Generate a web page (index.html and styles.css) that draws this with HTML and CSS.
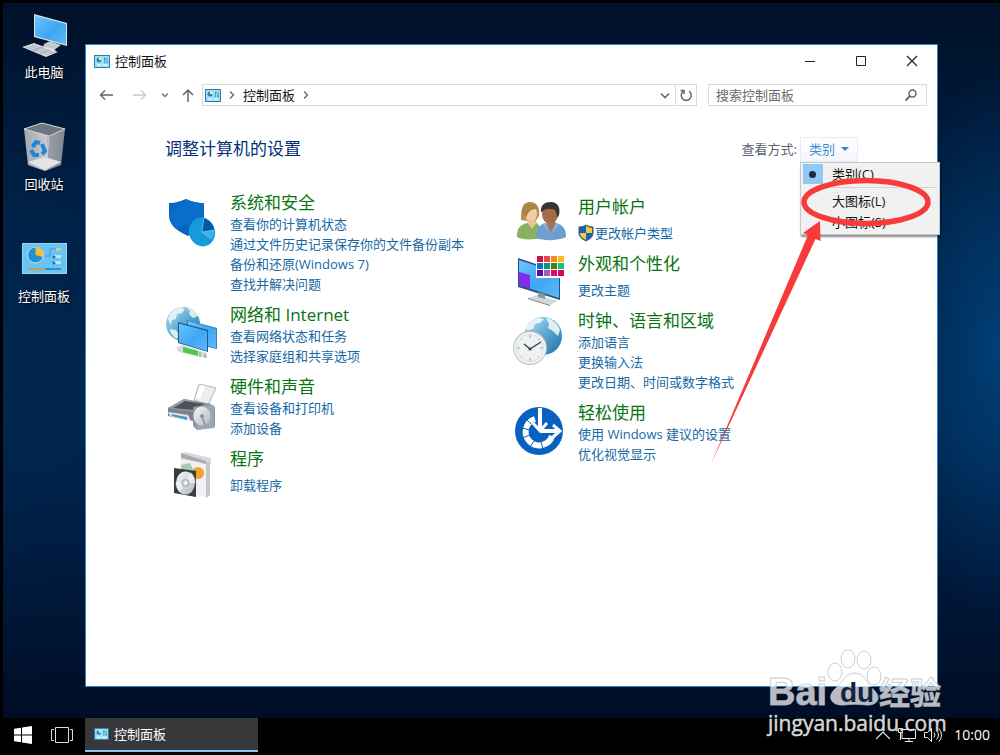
FILE: index.html
```html
<!DOCTYPE html>
<html lang="zh-CN">
<head>
<meta charset="utf-8">
<meta name="viewport" content="width=device-width, initial-scale=1">
<title>控制面板</title>
<link rel="stylesheet" href="styles.css">
</head>
<body>
<svg class="defs" width="0" height="0" aria-hidden="true">
  <defs>
    <linearGradient id="screen" x1="0" y1="0" x2="1" y2="1"><stop offset="0" stop-color="#6cc6fb"/><stop offset=".55" stop-color="#3fa6f3"/><stop offset="1" stop-color="#5fb9f8"/></linearGradient>
    <linearGradient id="globe" x1="0" y1="0" x2="1" y2="1"><stop offset="0" stop-color="#c5e4f3"/><stop offset=".5" stop-color="#5aa9d2"/><stop offset="1" stop-color="#1d6fa5"/></linearGradient>
    <linearGradient id="metal" x1="0" y1="0" x2="1" y2="1"><stop offset="0" stop-color="#f7f8f9"/><stop offset="1" stop-color="#b4b9bf"/></linearGradient>
    <linearGradient id="bin" x1="0" y1="0" x2="1" y2="0"><stop offset="0" stop-color="#a3a9b0"/><stop offset=".55" stop-color="#c6cacf"/><stop offset=".6" stop-color="#9a9fa7"/><stop offset="1" stop-color="#80868f"/></linearGradient>
    <symbol id="panel" viewBox="0 0 16 13">
      <rect width="16" height="13" fill="#2b7fa8"/><rect x="1" y="1" width="14" height="11" fill="#9be0f8"/>
      <circle cx="5" cy="5" r="2.500" fill="#2f86b8"/><path d="M5 5V2a3 3 0 0 1 3 3z" fill="#ffe9a8"/>
      <path d="M10.500 2.500v6M13 2.500v6M10 4h2M12 7h2" stroke="#3b8cb8" stroke-width=".8"/><path d="M3 10h4M9 10h4" stroke="#fff"/>
    </symbol>
  </defs>
</svg>

<div class="screen">
  <main class="desktop">
    <nav class="shortcuts" aria-label="桌面">
      <button class="shortcut" type="button">
        <svg width="48" height="48" viewBox="0 0 48 48" aria-hidden="true">
          <path d="M14 2l33 9v23L14 25z" fill="#d9e5ec"/><path d="M15 3.500l31 8.500v20.500l-31-8.500z" fill="url(#screen)"/>
          <path d="M24 32l6-3 11 4-7 5-11-2z" fill="#c4c9cf"/><path d="M21 34l15 4-3 2-14-4z" fill="#eef0f2"/>
          <path d="M2 35l12-4 24 9-12 5z" fill="#d5d8dc"/><path d="M6 35l23 8M9 34l23 8M12 33l23 8M13 39l10-4M20 42l9-4" stroke="#9aa1a8" stroke-width=".7"/>
        </svg>
        <span>此电脑</span>
      </button>
      <button class="shortcut" type="button">
        <svg width="48" height="48" viewBox="0 0 48 48" aria-hidden="true">
          <path d="M4 5L22 -1l23 6-4 36-16 6-17-6z" fill="url(#bin)"/>
          <path d="M4 5l18-6 23 6-16 7z" fill="#6e757d"/><path d="M4 5l18-6 23 6-16 7z" fill="none" stroke="#d3d7da"/>
          <path d="M29 12l-3 34" stroke="#d4d8db" stroke-width=".7"/><path d="M8 38l17-5 16 5-16 8z" fill="#e3e4e6"/>
          <g fill="none" stroke="#1e86d9" stroke-width="4"><path d="M12.500 23l3.500-5 4 1"/><path d="M22 20l3 7-3 3"/><path d="M19 31h-5l-3-5"/></g>
        </svg>
        <span>回收站</span>
      </button>
      <button class="shortcut" type="button">
        <svg width="48" height="48" viewBox="0 0 48 48" aria-hidden="true">
          <rect x="2" y="7" width="45" height="31" fill="#8edafa"/><rect x="3" y="8" width="43" height="29" fill="#69c4f4"/>
          <circle cx="15.500" cy="19" r="8" fill="#2391d3" stroke="#b9e9fc"/><path d="M15.500 19v-8a8 8 0 0 1 7.500 10z" fill="#ffbd2e"/>
          <path d="M25 20h5v-7h7M32 21h8M32 26h8" fill="none" stroke="#3897cf"/><path d="M36 12l5 0v3h-5z" fill="#c5cf9a"/><path d="M33 19h8v3h-8zM33 25h8v3h-8z" fill="#b5e6fb"/><path d="M33 19l3 2-3 2zM33 25l3 2-3 2z" fill="#176bad"/>
          <path d="M8 33h16" stroke="#c0a44d" stroke-width="2"/><path d="M25 33h16" stroke="#2c8fca" stroke-width="2"/>
        </svg>
        <span>控制面板</span>
      </button>
    </nav>

    <section class="window" aria-label="控制面板">
      <header class="titlebar">
        <svg width="16" height="13" aria-hidden="true"><use href="#panel"/></svg>
        <h1 class="title">控制面板</h1>
        <div class="caption-buttons">
          <button type="button" aria-label="最小化"><svg width="12" height="12"><path d="M1 6.500h10" stroke="#222"/></svg></button>
          <button type="button" aria-label="最大化"><svg width="12" height="12"><path d="M1.500 1.500h9v9h-9z" fill="none" stroke="#222"/></svg></button>
          <button type="button" aria-label="关闭"><svg width="12" height="12"><path d="M1 1l10 10M11 1L1 11" stroke="#222" stroke-width="1.200"/></svg></button>
        </div>
      </header>

      <div class="toolbar">
        <div class="history">
          <button type="button" aria-label="后退"><svg width="14" height="14" fill="none"><path d="M1 7h13M6 2.500L1.500 7 6 11.500" stroke="#666" stroke-width="1.400"/></svg></button>
          <button type="button" aria-label="前进"><svg width="14" height="14" fill="none"><path d="M0 7h13M8 2.500L12.500 7 8 11.500" stroke="#ccc" stroke-width="1.400"/></svg></button>
          <button class="recent" type="button" aria-label="最近浏览的位置"><svg width="8" height="14" fill="none"><path d="M1 5.500l3 3 3-3" stroke="#777" stroke-width="1.500"/></svg></button>
          <button type="button" aria-label="上移"><svg width="14" height="14" fill="none"><path d="M7 14V2M2 7l5-5 5 5" stroke="#666" stroke-width="1.500"/></svg></button>
        </div>
        <div class="address">
          <svg width="16" height="13" aria-hidden="true"><use href="#panel"/></svg>
          <svg class="sep" width="6" height="10" fill="none" aria-hidden="true"><path d="M1 1.500L4.500 5 1 8.500" stroke="#666" stroke-width="1.300"/></svg>
          <button type="button">控制面板</button>
          <svg class="sep" width="6" height="10" fill="none" aria-hidden="true"><path d="M1 1.500L4.500 5 1 8.500" stroke="#666" stroke-width="1.300"/></svg>
          <button class="drop" type="button" aria-label="地址历史"><svg width="12" height="12" fill="none"><path d="M2 4.500l4 4 4-4" stroke="#666" stroke-width="1.600"/></svg></button>
          <button class="refresh" type="button" aria-label="刷新"><svg width="14" height="14" fill="none"><path d="M4.500 3.200a5 5 0 1 0 5.500 0M1.500 2.500h3.500v3.500" stroke="#666" stroke-width="1.500"/></svg></button>
        </div>
        <div class="search">
          <input type="search" placeholder="搜索控制面板" aria-label="搜索控制面板">
          <svg width="14" height="14" fill="none" aria-hidden="true"><circle cx="8.500" cy="5.500" r="3.500" stroke="#666" stroke-width="1.500"/><path d="M6 8L1.500 12.500" stroke="#666" stroke-width="1.800"/></svg>
        </div>
      </div>

      <div class="content">
        <div class="heading-row">
          <h2 class="heading">调整计算机的设置</h2>
          <div class="view">
            <span id="view-label">查看方式:</span>
            <div class="view-switch">
              <button class="view-button" type="button" aria-haspopup="menu" aria-expanded="true" aria-describedby="view-label">类别<svg width="8" height="4" aria-hidden="true"><path d="M0 0h8L4 4z" fill="#3483c4"/></svg></button>
              <div class="menu" role="menu">
                <button type="button" role="menuitemradio" aria-checked="true"><i class="mark"></i>类别(C)</button>
                <hr>
                <button type="button" role="menuitemradio" aria-checked="false"><i class="mark"></i>大图标(L)</button>
                <button type="button" role="menuitemradio" aria-checked="false"><i class="mark"></i>小图标(S)</button>
              </div>
              <svg class="annotation" width="230" height="310" viewBox="-95 0 230 310" aria-hidden="true">
                <ellipse cx="65" cy="40" rx="62" ry="21.500" fill="none" stroke="#f63b3a" stroke-width="5.500"/>
                <path d="M19 59L2 71l5 2L-90 302 14.500 77l5 2z" fill="#f63b3a"/>
              </svg>
            </div>
          </div>
        </div>

        <div class="categories">
          <div class="column">
            <article class="category">
              <svg class="icon" viewBox="0 0 52 47" aria-hidden="true">
                <path d="M4 11c7 0 12-2 17-4 5 2 10 4 18 4v13c0 9-7 15-16 20C12 39 4 33 4 23z" fill="#0865c1"/><path d="M21 7c5 2 10 4 18 4v13L11 37C7 33 4 29 4 23z" fill="#0a72d0" opacity=".65"/>
                <ellipse cx="37" cy="40" rx="13" ry="14.500" fill="#159bd9" transform="rotate(-15 37 40)"/>
                <path d="M37 40l2-14c5 2 9 6 10 12z" fill="#0756a5"/><path d="M37 40l9 7c3-3 4-6 3-9z" fill="#36b5ed"/><path d="M37 40l2-14M37 40l12-2M37 40l9 7" stroke="#9ddcf5" stroke-width=".5"/>
              </svg>
              <div><h3><a href="#">系统和安全</a></h3>
                <ul><li><a href="#">查看你的计算机状态</a></li><li><a href="#">通过文件历史记录保存你的文件备份副本</a></li><li><a href="#">备份和还原(Windows 7)</a></li><li><a href="#">查找并解决问题</a></li></ul></div>
            </article>
            <article class="category">
              <svg class="icon" viewBox="0 0 52 47" aria-hidden="true">
                <circle cx="18" cy="20" r="17" fill="url(#globe)"/><path d="M3 15c2-6 7-11 13-12l4 2-3 4-5 1-1 5-4 1-1 5zM21 4c6 0 10 4 12 8l-5 2-4-4 1-3zM5 25l6 1 3 5-2 4c-4-2-7-6-7-10z" fill="#eff8f8" opacity=".85"/>
                <path d="M22 16l30 8v21l-30-7z" fill="#3a7fb5"/><path d="M23 17l28 8v19l-28-7z" fill="url(#screen)"/>
                <path d="M13 18l30 8v22l-30-9z" fill="#1b5b94"/><path d="M14 19.500l28 7.500v20l-28-8.500z" fill="url(#screen)"/>
                <path d="M12 43l5-2 25 8v5l-5-1-20-4-5-2z" fill="#d6dbd9"/><path d="M18 43l15 4v5l-15-4z" fill="#4cc947"/><path d="M35 48v5M40 50v4" stroke="#b0b6b3" stroke-width="2"/>
              </svg>
              <div><h3><a href="#">网络和 Internet</a></h3>
                <ul><li><a href="#">查看网络状态和任务</a></li><li><a href="#">选择家庭组和共享选项</a></li></ul></div>
            </article>
            <article class="category">
              <svg class="icon" viewBox="0 0 52 47" aria-hidden="true">
                <path d="M29 24l5-16 17 4-8 17z" fill="#eceded" stroke="#b4b7bd"/><path d="M35 9l5 1-5 13-4-1z" fill="#fff"/>
                <path d="M3 32l16-9 27 5v14L28 45 3 40z" fill="#7d828a"/><path d="M3 32l16-9 27 5-16 8z" fill="#9a9ea5"/><path d="M8 32l12-7 20 3-12 6z" fill="#4c5058"/>
                <path d="M3 36l20 3 3 6-21-5z" fill="#e3e8ef"/><path d="M6 38l16 3v3l-15-4z" fill="#4197c9"/>
                <path d="M28 31l17-3 5 3v20l-18 3-4-4z" fill="#8d96a6"/><path d="M31 31l18-2v23l-17 2z" fill="#9da6b5"/><ellipse cx="37" cy="40" rx="8.500" ry="9.500" fill="url(#metal)"/><circle cx="37" cy="40" r="2" fill="#8d949e"/><path d="M37 40l3 9" stroke="#8b929c" stroke-width="1.500"/>
              </svg>
              <div><h3><a href="#">硬件和声音</a></h3>
                <ul><li><a href="#">查看设备和打印机</a></li><li><a href="#">添加设备</a></li></ul></div>
            </article>
            <article class="category">
              <svg class="icon" viewBox="0 0 52 47" aria-hidden="true">
                <path d="M16 5l4-1 26 6v6l-30-5z" fill="#d7d8dc"/><path d="M16 10l25 5v34l-25-4z" fill="#f0f0f2"/><path d="M41 15l4-2v34l-4 3z" fill="#c5c6cb"/><path d="M16 5l25 8v3l-25-6z" fill="#a9abb2"/>
                <path d="M16 17l9-2 6 13-15 4z" fill="#a5c9b2"/><circle cx="33" cy="25" r="6" fill="#f4a130"/>
                <path d="M9 20l22 3v26L9 45z" fill="#373c44"/><ellipse cx="20.500" cy="35" rx="9.500" ry="11.500" fill="url(#metal)"/><path d="M20.500 35l5-11c4 3 5 7 5 11zM20.500 35l-6 9c-3-3-4-6-4-10z" fill="#fff" opacity=".55"/><circle cx="20.500" cy="35" r="3.500" fill="#d5d8db" stroke="#9da2a8"/><circle cx="20.500" cy="35" r="1.500" fill="#fff"/>
              </svg>
              <div><h3><a href="#">程序</a></h3>
                <ul class="single"><li><a href="#">卸载程序</a></li></ul></div>
            </article>
          </div>

          <div class="column column-right">
            <article class="category">
              <svg class="icon" viewBox="0 0 52 47" aria-hidden="true">
                <path d="M8 24c0-8 0-18 9-18 8 0 10 7 9 14l-4 6z" fill="#b39252"/><ellipse cx="18" cy="18" rx="6" ry="8" fill="#f3cba5"/><path d="M9 18c0-6 3-10 9-10 4 0 6 2 7 5-5 0-9 0-12 9z" fill="#a78749"/>
                <path d="M4 41c0-8 2-12 10-14l5 3 5-3 5 6v9c-9 2-20 2-25-1z" fill="#88b260"/><path d="M14 26l5 7 5-7-2-2h-7z" fill="#efc199"/>
                <ellipse cx="37" cy="18" rx="8" ry="10" fill="#a66c47"/><path d="M28 16c-1-7 4-10 10-10 6 0 10 5 8 13l-2 3c0-5-1-8-4-9-5 0-8-1-11 3z" fill="#363535"/>
                <path d="M23 42c0-9 3-13 9-15l6 3 5-3c8 2 10 7 10 14-8 4-22 4-30 1z" fill="#709dd0"/><path d="M33 26l5 10 5-10z" fill="#aa7048"/><path d="M32 27l-2 2 7 8zM43 27l3 2-7 8z" fill="#8db3de"/>
              </svg>
              <div><h3><a href="#">用户帐户</a></h3>
                <ul class="single"><li class="shielded"><svg width="16" height="18" viewBox="0 0 16 18" aria-hidden="true"><path d="M8 1c2 1 4 2 7 2v6c0 4-3 6-7 8-4-2-7-4-7-8V3c3 0 5-1 7-2z" fill="#1665b2" stroke="#4a5964"/><path d="M8 2c2 1 4 2 6 2v5H8zM2 9h6v7c-4-2-6-4-6-7z" fill="#fac743"/></svg><a href="#">更改帐户类型</a></li></ul></div>
            </article>
            <article class="category">
              <svg class="icon" viewBox="0 0 52 47" aria-hidden="true">
                <path d="M5 5l42 14v28L5 34z" fill="#24517f"/><path d="M6 7l40 13v25L6 32z" fill="url(#screen)"/><path d="M6 19l11 3v14L6 32z" fill="#852bec"/>
                <path d="M15 45l9-3 21 6-8 4z" fill="#d3d8dc"/><path d="M25 39l7 2v5l-7-2z" fill="#8b939b"/><path d="M15 45l22 7v1l-22-7z" fill="#777f87"/>
                <path d="M23 2h31v23H23z" fill="#fff"/>
                <path d="M24 3h6v6h-6z" fill="#c9173c"/><path d="M31 3h6v6h-6z" fill="#eb4848"/><path d="M38 3h6v6h-6z" fill="#f68722"/><path d="M45 3h6v6h-6z" fill="#ffba1d"/><path d="M24 10h6v6h-6z" fill="#0b70cb"/><path d="M31 10h6v6h-6z" fill="#13908d"/><path d="M38 10h6v6h-6z" fill="#41850d"/><path d="M45 10h6v6h-6z" fill="#11c674"/><path d="M24 17h6v6h-6z" fill="#5d09ac"/><path d="M31 17h6v6h-6z" fill="#9367b7"/><path d="M38 17h6v6h-6z" fill="#e1067c"/><path d="M45 17h6v6h-6z" fill="#d6085b"/>
              </svg>
              <div><h3><a href="#">外观和个性化</a></h3>
                <ul class="single"><li><a href="#">更改主题</a></li></ul></div>
            </article>
            <article class="category">
              <svg class="icon" viewBox="0 0 52 47" aria-hidden="true">
                <circle cx="30" cy="26" r="19" fill="url(#globe)"/><path d="M12 19c3-6 9-10 14-11l5 1-4 4-5 1-2 5-5 1zM33 8c7 1 12 6 14 12l-2 6-5-5-5-3 1-4z" fill="#edf7f7" opacity=".9"/>
                <circle cx="17" cy="38" r="17" fill="#b9bfc3"/><circle cx="17" cy="38" r="16" fill="#eff1f2"/><circle cx="17" cy="38" r="13.500" fill="none" stroke="#dde1e4"/>
                <path d="M17 25v3M17 48v3M4 38h3M27 38h3M8 29l1 1M26 29l-1 1M8 47l1-1M26 47l-1-1" stroke="#9ba2a7"/><path d="M11 34l6 5 11-7" fill="none" stroke="#333c42" stroke-width="1.300"/><circle cx="17" cy="39" r="1.500" fill="#333c42"/>
              </svg>
              <div><h3><a href="#">时钟、语言和区域</a></h3>
                <ul><li><a href="#">添加语言</a></li><li><a href="#">更换输入法</a></li><li><a href="#">更改日期、时间或数字格式</a></li></ul></div>
            </article>
            <article class="category">
              <svg class="icon" viewBox="0 0 52 47" aria-hidden="true">
                <circle cx="26" cy="29" r="24" fill="#0862bd"/><path d="M22 17a13.500 13.500 0 1 0 17 17" fill="none" stroke="#fff" stroke-width="6"/>
                <path d="M9 26l8 2M9 36l8-3M17 45l4-6M30 47l-2-7M13 17l5 5" stroke="#0862bd"/>
                <path d="M27 6v25M27 29h18" stroke="#0862bd" stroke-width="8"/>
                <path d="M27 6v22M28 29h17" stroke="#fff" stroke-width="4"/><path d="M20 21l7 8 7-8M40 23l7 6-7 6" fill="none" stroke="#fff" stroke-width="3"/>
              </svg>
              <div><h3><a href="#">轻松使用</a></h3>
                <ul><li><a href="#">使用 Windows 建议的设置</a></li><li><a href="#">优化视觉显示</a></li></ul></div>
            </article>
          </div>
        </div>
      </div>
    </section>
  </main>

  <footer class="taskbar">
    <button class="start" type="button" aria-label="开始"><svg width="18" height="18" fill="#fff"><path d="M0 2.800l7-1v6.700H0zM8 1.600L18 0v8.500H8zM0 9.500h7v6.700l-7-1zM8 9.500h10V18L8 16.400z"/></svg></button>
    <button class="task-view" type="button" aria-label="任务视图"><svg width="22" height="18" fill="none" stroke="#ddd"><path d="M4.500 1.500h13v15h-13zM3 3.500H.500v11H3M19 3.500h2.500v11H19"/></svg></button>
    <button class="task" type="button"><svg width="15" height="12" aria-hidden="true"><use href="#panel"/></svg>控制面板</button>
    <div class="tray">
      <button type="button" aria-label="显示隐藏的图标"><svg width="14" height="16" fill="none"><path d="M0 12l7-7 7 7" stroke="#eee" stroke-width="1.200"/></svg></button>
      <button type="button" aria-label="网络"><svg width="18" height="16" fill="none" stroke="#eee"><path d="M5 2.500h12.500v9H4V6M11 12v2M7 14.500h8M.500 1.500h4v4h-4zM2.500 6v7"/></svg></button>
      <button type="button" aria-label="音量"><svg width="18" height="16" fill="none" stroke="#eee"><path d="M.500 5.500h3l4-4v13l-4-4h-3zM10 5.500q2 2.500 0 5M12.500 3.500q4 4.500 0 9M15 1.500q5 6.500 0 13"/></svg></button>
      <time>10:00</time>
    </div>
  </footer>

  <div class="watermark" aria-hidden="true">
    <svg width="190" height="95" viewBox="0 0 190 95">
      <g fill="#fff" fill-opacity=".72" stroke="#b9bdc4" stroke-opacity=".75">
        <ellipse cx="70" cy="25" rx="7" ry="9"/><ellipse cx="83" cy="12" rx="7" ry="9"/><ellipse cx="99" cy="13" rx="7" ry="9"/><ellipse cx="109" cy="29" rx="7" ry="9"/>
        <path d="M90 26c10 0 11 10 18 16 10 9 4 17-7 16-8-1-15-1-22 0-12 1-18-8-9-16 8-7 10-16 20-16z"/>
        <text class="wm-latin" x="3" y="58">Bai</text>
        <text class="wm-cjk" x="114" y="57">经验</text>
      </g>
      <text class="wm-du" x="75" y="55">du</text>
      <text class="wm-url" x="3" y="84">jingyan.baidu.com</text>
    </svg>
  </div>
</div>
</body>
</html>
```
FILE: styles.css
```css
* {
  box-sizing: border-box;
}

body {
  margin: 0;
  background: #000;
  font: 13px/20px "Open Sans", "Noto Sans CJK SC", sans-serif;
  color: #111;
}

button {
  display: inline-flex;
  align-items: center;
  padding: 0;
  border: 0;
  background: none;
  font: inherit;
  color: inherit;
}

a {
  color: inherit;
  text-decoration: none;
}

svg {
  display: block;
  flex: none;
}

.defs {
  position: absolute;
}

.screen {
  position: relative;
  display: flex;
  flex-direction: column;
  min-height: 100vh;
  padding: 3px 0 3px 3px;
}

/* Desktop */
.desktop {
  flex: 1;
  display: grid;
  grid-template-columns: 82px minmax(0, 1fr);
  padding-right: 62px;
  background:
    radial-gradient(ellipse 120px 280px at 100% 48%, rgba(0, 80, 142, .65), transparent),
    radial-gradient(ellipse 260px 340px at 0 48%, rgba(0, 50, 94, .4), transparent),
    linear-gradient(#00112a, #001c40 30%, #00214a 60%, #000d26);
}

.shortcuts {
  display: flex;
  flex-direction: column;
  padding-top: 9px;
}

.shortcut {
  flex-direction: column;
  height: 112px;
  gap: 2px;
  color: #fff;
  text-shadow: 1px 1px 2px #000;
}

.shortcut svg {
  overflow: visible;
}

/* Window */
.window {
  display: flex;
  flex-direction: column;
  margin: 41px 0 31px;
  border: 1px solid #3484bb;
  background: #fff;
}

.titlebar {
  display: flex;
  align-items: center;
  gap: 5px;
  height: 32px;
  padding-left: 8px;
}

.title {
  flex: 1;
  margin: 0;
  font-size: 13px;
  font-weight: 400;
}

.caption-buttons {
  display: flex;
}

.caption-buttons button {
  justify-content: center;
  width: 51px;
  height: 30px;
}

.toolbar {
  display: flex;
  align-items: center;
  gap: 11px;
  padding: 7px 10px 7px 13px;
}

.history {
  display: flex;
  align-items: center;
  gap: 20px;
  margin-right: -4px;
}

.history .recent {
  margin: 0 -8px 0 -6px;
}

.address,
.search {
  display: flex;
  align-items: center;
  height: 22px;
  border: 1px solid #d9d9d9;
}

.address {
  flex: 1;
  gap: 8px;
  padding-left: 2px;
}

.address .drop {
  margin-left: auto;
}

.address .refresh {
  justify-content: center;
  align-self: stretch;
  width: 21px;
  margin-left: -4px;
  border-left: 1px solid #d9d9d9;
}

.search {
  width: 219px;
  padding: 0 8px 0 7px;
}

.search input {
  flex: 1;
  min-width: 0;
  padding: 0;
  border: 0;
  outline: 0;
  background: none;
  font: inherit;
}

.search input::placeholder {
  color: #6b6b6b;
  opacity: 1;
}

/* Content */
.content {
  padding: 24px 79px 24px;
}

.heading-row {
  display: flex;
  align-items: center;
  justify-content: space-between;
  height: 24px;
}

.heading {
  margin: 0;
  font-size: 17px;
  font-weight: 400;
  line-height: 24px;
  color: #003075;
}

.view {
  display: flex;
  align-items: center;
  gap: 3px;
  color: #5a6270;
}

.view-switch {
  position: relative;
}

.view-button {
  gap: 6px;
  height: 25px;
  padding: 0 8px;
  border: 1px solid #e3ebf4;
  background: linear-gradient(#fff, #f3f7fc);
  color: #3c8fd2;
}

.menu {
  position: absolute;
  z-index: 1;
  top: 25px;
  left: 0;
  width: 140px;
  padding: 1px 2px;
  border: 1px solid #c9c9c9;
  background: #f1f1f1;
  box-shadow: 1px 2px 2px rgba(0, 0, 0, .45);
  color: #111;
}

.menu button {
  display: flex;
  gap: 9px;
  width: 100%;
  height: 21px;
}

.menu hr {
  margin: 2px 0 3px 28px;
  border: 0;
  border-top: 1px solid #d0d0d0;
}

.mark {
  display: grid;
  place-items: center;
  width: 20px;
  height: 20px;
}

[aria-checked="true"] .mark {
  background: #90c8f6;
}

[aria-checked="true"] .mark::before {
  content: "";
  width: 7px;
  height: 7px;
  border-radius: 50%;
  background: #1d2b3a;
}

.annotation {
  position: absolute;
  z-index: 2;
  top: 25px;
  left: -94px;
  pointer-events: none;
}

.categories {
  display: grid;
  grid-template-columns: minmax(0, 348px) minmax(0, 1fr);
  padding-top: 31px;
}

.column {
  display: flex;
  flex-direction: column;
  gap: 10px;
}

.column-right {
  padding-top: 4px;
}

.category {
  display: flex;
  gap: 13px;
}

.icon {
  width: 52px;
  height: 47px;
  overflow: visible;
}

.category h3 {
  margin: 0;
  font-size: 17px;
  font-weight: 400;
  line-height: 22px;
  color: #077411;
}

.category ul {
  margin: 0;
  padding: 0;
  list-style: none;
  color: #1769a5;
}

.category .single {
  padding-top: 5px;
}

.shielded {
  display: flex;
  align-items: center;
  gap: 1px;
  height: 20px;
}

/* Taskbar */
.taskbar {
  display: flex;
  align-items: stretch;
  height: 34px;
  padding-left: 11px;
  color: #fff;
}

.start {
  width: 37px;
}

.task-view {
  width: 34px;
}

.task {
  gap: 5px;
  width: 173px;
  padding-left: 9px;
  border-bottom: 2px solid #8dc1ee;
  background: #37383a;
}

.tray {
  display: flex;
  align-items: center;
  gap: 8px;
  margin-left: auto;
  padding-right: 10px;
}

.tray time {
  margin-left: 4px;
  font-size: 14px;
}

.watermark {
  position: absolute;
  right: 45px;
  bottom: 13px;
  pointer-events: none;
}

.wm-latin,
.wm-du {
  font: 700 38px "Liberation Sans", sans-serif;
}

.wm-cjk {
  font: 700 31px "Noto Sans CJK SC", sans-serif;
}

.wm-du {
  font-size: 28px;
  fill: #14233f;
}

.wm-url {
  font: 21px "Open Sans", sans-serif;
  fill: #d4d6da;
  stroke: #d4d6da;
  stroke-width: 0.5;
}
```
